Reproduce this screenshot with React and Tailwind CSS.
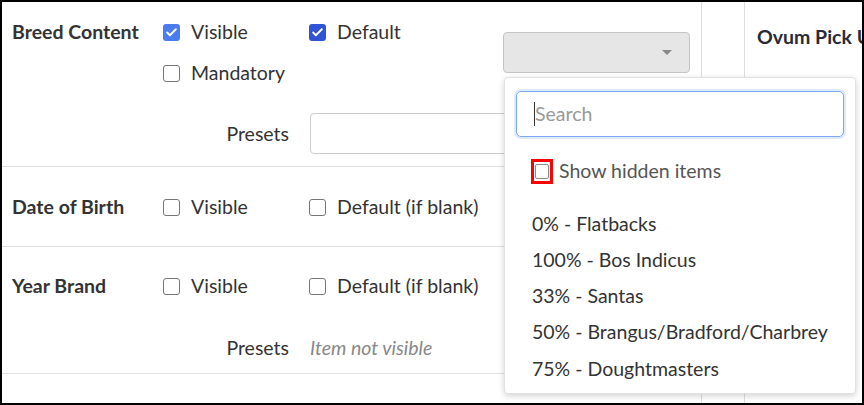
import { Check } from 'lucide-react';

const font = { fontFamily: 'Lato, "Open Sans", sans-serif' };

const Box = ({ checked, tone = 'bg-[#4a7cf0]' }) => (
  <span
    className={`inline-flex h-[17px] w-[17px] shrink-0 items-center justify-center rounded-[3px] ${
      checked ? `${tone}` : 'border-[1.5px] border-[#767676] bg-white'
    }`}
  >
    {checked && <Check size={13} strokeWidth={3.5} className="text-white" />}
  </span>
);

const CheckItem = ({ label, checked, tone }) => (
  <label className="flex h-6 items-center gap-[11px] whitespace-nowrap">
    <Box checked={checked} tone={tone} />
    <span>{label}</span>
  </label>
);

const items = [
  '0% - Flatbacks',
  '100% - Bos Indicus',
  '33% - Santas',
  '50% - Brangus/Bradford/Charbrey',
  '75% - Doughtmasters',
];

const App = () => {
  return (
    <div
      style={font}
      className="relative flex h-[405px] w-[864px] overflow-hidden border-2 border-black bg-white text-[19.5px] text-[#333]"
    >
      {/* left settings panel */}
      <div className="w-[700px] shrink-0 border-r border-[#dedede]">
        <div className="border-b border-[#dedede]">
          <div className="flex pl-[10px] pt-[18px]">
            <div className="w-[151px] font-bold leading-6">Breed Content</div>
            <div className="flex w-[146px] flex-col gap-[17px]">
              <CheckItem label="Visible" checked />
              <CheckItem label="Mandatory" />
            </div>
            <div className="w-[194px]">
              <CheckItem label="Default" checked tone="bg-[#2f55d4]" />
            </div>
            <div className="mt-[12px] flex h-[41px] w-[187px] items-center justify-end rounded-[4px] border border-[#c4c4c4] bg-[#e6e6e6] pr-[17px]">
              <span className="h-0 w-0 border-x-[5px] border-t-[5px] border-x-transparent border-t-[#888]" />
            </div>
          </div>
          <div className="mb-[12px] mt-[28px] flex items-center">
            <div className="w-[287px] text-right">Presets</div>
            <div className="ml-[21px] h-[41px] w-[380px] rounded-[4px] border border-[#ccc] bg-white" />
          </div>
        </div>

        <div className="flex border-b border-[#dedede] pb-[27px] pl-[10px] pt-[28px]">
          <div className="w-[151px] font-bold leading-6">Date of Birth</div>
          <div className="w-[146px]">
            <CheckItem label="Visible" />
          </div>
          <CheckItem label="Default (if blank)" />
        </div>

        <div className="border-b border-[#dedede] pb-[13px] pt-[27px]">
          <div className="flex pl-[10px]">
            <div className="w-[151px] font-bold leading-6">Year Brand</div>
            <div className="w-[146px]">
              <CheckItem label="Visible" />
            </div>
            <CheckItem label="Default (if blank)" />
          </div>
          <div className="mt-[38px] flex h-6 items-center">
            <div className="w-[287px] text-right">Presets</div>
            <div className="ml-[21px] italic text-[#888]">Item not visible</div>
          </div>
        </div>
      </div>

      <div className="w-[43px] shrink-0 border-r border-[#dedede]" />

      <div className="min-w-0 flex-1 overflow-hidden pl-[12px] pt-[23px]">
        <div className="whitespace-nowrap font-bold leading-6 text-[#2a2a38]">Ovum Pick Up</div>
      </div>

      {/* open select dropdown */}
      <div className="absolute left-[502px] top-[75px] h-[317px] w-[352px] rounded-[4px] border border-[#e2e2e2] bg-white shadow-[0_2px_6px_rgba(0,0,0,0.18)]">
        <div className="mx-[11px] mt-[13px] flex h-[46px] items-center rounded-[5px] border border-[#7ea8ef] pl-[17px] shadow-[0_0_0_2px_rgba(126,168,239,0.25)]">
          <span className="h-[24px] w-px bg-[#333]" />
          <span className="text-[#999]">Search</span>
        </div>
        <div className="ml-[26px] mt-[22px] flex h-6 items-center gap-[6px]">
          <span className="flex h-[25px] w-[22px] items-center justify-center border-[3px] border-[#f00]">
            <span className="h-[15px] w-[14px] rounded-[2px] border-[1.5px] border-[#8a8a8a] bg-white" />
          </span>
          <span className="text-[#555]">Show hidden items</span>
        </div>
        <div className="mt-[22px] flex flex-col">
          {items.map((it) => (
            <div key={it} className="flex h-[36.25px] items-center whitespace-nowrap pl-[27px]">
              {it}
            </div>
          ))}
        </div>
      </div>
    </div>
  );
};

export default App;
